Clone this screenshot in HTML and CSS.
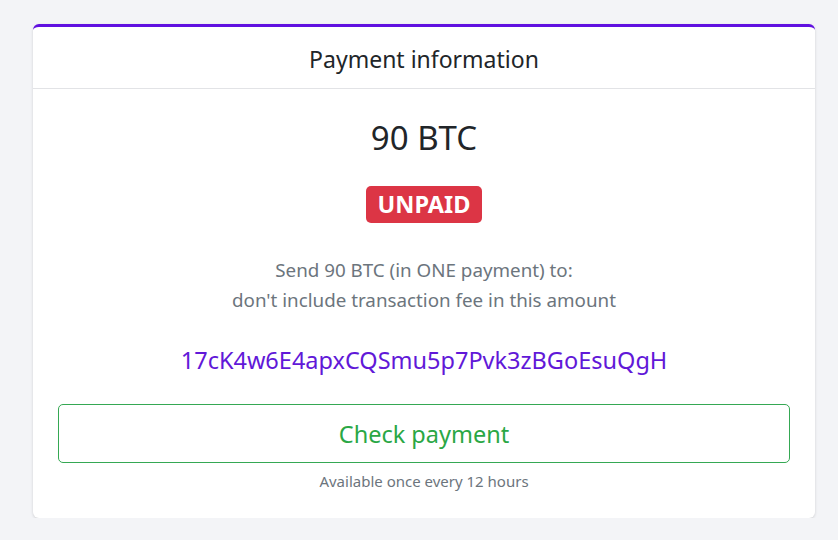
FILE: index.html
```html
<!DOCTYPE html>
<html>
<head>
<meta charset="utf-8">
<link rel="stylesheet" href="styles.css">
</head>
<body>
<div class="card">
  <div class="card-header">Payment information</div>
  <div class="card-body">
    <div class="amount">90 BTC</div>
    <div class="badge-row"><span class="badge">UNPAID</span></div>
    <p class="instructions">Send 90 BTC (in ONE payment) to:<br>don't include transaction fee in this amount</p>
    <div class="address">17cK4w6E4apxCQSmu5p7Pvk3zBGoEsuQgH</div>
    <button class="btn-check">Check payment</button>
    <div class="note">Available once every 12 hours</div>
  </div>
</div>
</body>
</html>
```
FILE: styles.css
```css
html, body {
  margin: 0;
  padding: 0;
  background: #f3f4f7;
  font-family: "Noto Sans", "Open Sans", sans-serif;
  color: #212529;
}
body {
  padding: 24px 23px 0 33px;
}
.card {
  background: #fff;
  border-top: 3px solid #6010e0;
  border-radius: 6px;
  box-shadow: 0 1px 3px rgba(0,0,0,0.15);
  width: 782px;
}
.card-header {
  text-align: center;
  font-size: 23px;
  height: 61px;
  line-height: 65px;
  border-bottom: 1px solid #e2e3e6;
}
.card-body {
  padding: 26px 25px 27px;
  text-align: center;
}
.amount {
  font-size: 33px;
  line-height: 46px;
}
.badge-row {
  margin-top: 25px;
  display: flex;
  justify-content: center;
}
.badge {
  display: block;
  background: #dc3545;
  color: #fff;
  font-weight: 700;
  font-size: 23.5px;
  line-height: 37px;
  height: 37px;
  padding: 0 12px;
  border-radius: 5px;
}
.instructions {
  margin: 32px 0 0;
  color: #6c757d;
  font-size: 18.8px;
  line-height: 30px;
}
.address {
  margin-top: 29px;
  color: #6118d8;
  font-size: 23.5px;
  line-height: 32px;
}
.btn-check {
  display: block;
  width: 100%;
  margin-top: 28px;
  height: 59px;
  background: #fff;
  border: 1px solid #35a853;
  border-radius: 5px;
  color: #2aa745;
  font-family: inherit;
  font-size: 23.5px;
}
.note {
  margin-top: 8px;
  color: #6c757d;
  font-size: 15px;
  line-height: 20px;
}
```
